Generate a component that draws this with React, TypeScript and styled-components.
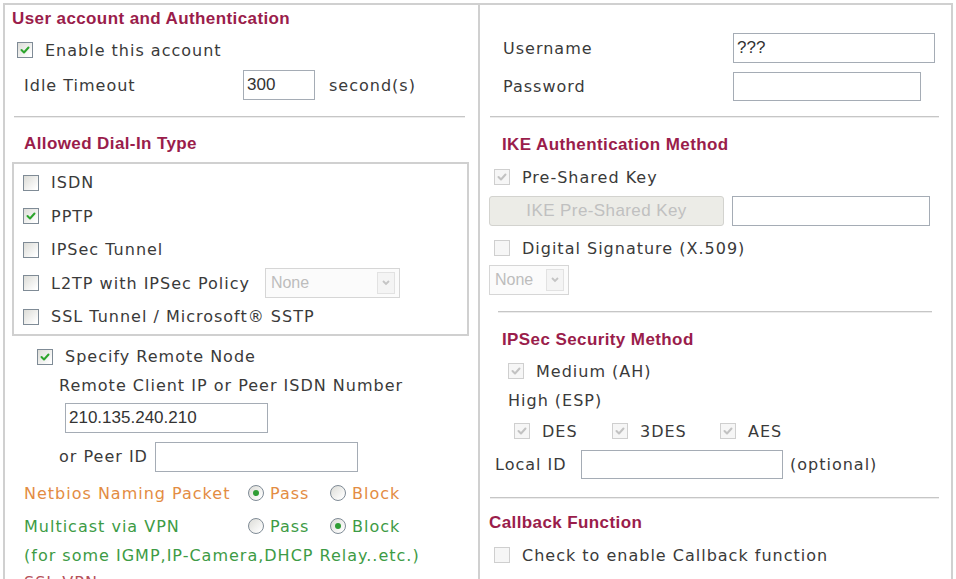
import React from "react";
import styled, { createGlobalStyle } from "styled-components";

const Global = createGlobalStyle`
  html, body { margin: 0; padding: 0; background: #fff; }
  body {
    font-family: "DejaVu Sans", Verdana, sans-serif;
    font-size: 16px;
    letter-spacing: 1px;
    color: #3a3a3a;
  }
  * { box-sizing: border-box; }
`;

const Page = styled.div`
  width: 956px;
  height: 579px;
  overflow: hidden;
  padding: 3px 0 0 3px;
`;

const Table = styled.div`
  width: 950px;
  height: 620px;
  border: 2px solid #d0d0d0;
  border-bottom: none;
  display: grid;
  grid-template-columns: 475px 1fr;
`;

const Column = styled.div<{ $divider?: boolean }>`
  display: flex;
  flex-direction: column;
  border-right: ${(p) => (p.$divider ? "2px solid #d0d0d0" : "none")};
`;

const Row = styled.div<{ $h: number; $pl?: number; $mt?: number }>`
  display: flex;
  align-items: center;
  height: ${(p) => p.$h}px;
  padding-left: ${(p) => p.$pl ?? 0}px;
  margin-top: ${(p) => p.$mt ?? 0}px;
  flex-shrink: 0;
  white-space: nowrap;
`;

const Heading = styled.span`
  font-family: "Liberation Sans", Arial, sans-serif;
  font-weight: bold;
  font-size: 17px;
  letter-spacing: 0.4px;
  color: #9a1d4b;
`;

const Divider = styled.div<{ $mt: number; $ml: number; $mr: number }>`
  margin: ${(p) => p.$mt}px ${(p) => p.$mr}px 0 ${(p) => p.$ml}px;
  border-top: 1px solid #c6c6c6;
  border-bottom: 1px solid #ececec;
  flex-shrink: 0;
`;

const GroupBox = styled.div`
  margin: 2px 9px 0 7px;
  border: 2px solid #d0d0d0;
  padding-top: 2px;
  display: flex;
  flex-direction: column;
  flex-shrink: 0;
`;

const GroupRow = styled.div`
  display: flex;
  align-items: center;
  height: 33.5px;
  padding-left: 9px;
  white-space: nowrap;
`;

const Label = styled.span<{ $w?: number; $color?: string }>`
  display: inline-block;
  width: ${(p) => (p.$w ? `${p.$w}px` : "auto")};
  color: ${(p) => p.$color ?? "#3a3a3a"};
`;

const Box = styled.span<{ $disabled?: boolean; $ml?: number }>`
  display: inline-flex;
  align-items: center;
  justify-content: center;
  width: 16px;
  height: 16px;
  margin-left: ${(p) => p.$ml ?? 0}px;
  margin-right: 12px;
  flex-shrink: 0;
  border: 1px solid ${(p) => (p.$disabled ? "#cfcfcf" : "#7f8b96")};
  background: ${(p) =>
    p.$disabled ? "#f6f6f6" : "linear-gradient(135deg, #dcdcd7 0%, #ffffff 90%)"};
`;

const Check = ({ checked, disabled, ml }: { checked?: boolean; disabled?: boolean; ml?: number }) => (
  <Box $disabled={disabled} $ml={ml}>
    {checked && (
      <svg width="12" height="12" viewBox="0 0 12 12">
        <path
          d="M2.5 6 L5 8.5 L9.5 3.5"
          fill="none"
          stroke={disabled ? "#c2c2c2" : "#2da52d"}
          strokeWidth="2"
          strokeLinecap="round"
          strokeLinejoin="round"
        />
      </svg>
    )}
  </Box>
);

const RadioCircle = styled.span`
  display: inline-flex;
  align-items: center;
  justify-content: center;
  width: 16px;
  height: 16px;
  border-radius: 50%;
  border: 1px solid #7f8b96;
  background: linear-gradient(135deg, #dcdcd7 0%, #ffffff 90%);
  margin-right: 6px;
  flex-shrink: 0;
`;

const Dot = styled.span`
  width: 6px;
  height: 6px;
  border-radius: 50%;
  background: #2f9d34;
`;

const RadioOption = styled.span<{ $w?: number; $color: string }>`
  display: inline-flex;
  align-items: center;
  width: ${(p) => (p.$w ? `${p.$w}px` : "auto")};
  color: ${(p) => p.$color};
`;

const Radio = ({ on, label, color, w }: { on?: boolean; label: string; color: string; w?: number }) => (
  <RadioOption $w={w} $color={color}>
    <RadioCircle>{on && <Dot />}</RadioCircle>
    {label}
  </RadioOption>
);

const CheckItem = styled.span<{ $w?: number }>`
  display: inline-flex;
  align-items: center;
  width: ${(p) => (p.$w ? `${p.$w}px` : "auto")};
`;

const TextInput = styled.div<{ $w: number; $h?: number; $ml?: number }>`
  width: ${(p) => p.$w}px;
  height: ${(p) => p.$h ?? 30}px;
  margin-left: ${(p) => p.$ml ?? 0}px;
  border: 1px solid #a5acb5;
  background: #fff;
  font-family: "Liberation Sans", Arial, sans-serif;
  font-size: 17px;
  letter-spacing: 0;
  color: #333;
  display: flex;
  align-items: center;
  padding-left: 3px;
  flex-shrink: 0;
`;

const Select = styled.div<{ $w: number; $ml?: number }>`
  width: ${(p) => p.$w}px;
  height: 30px;
  margin-left: ${(p) => p.$ml ?? 0}px;
  border: 1px solid #d6d6d6;
  background: #fbfbfb;
  display: flex;
  align-items: center;
  justify-content: space-between;
  padding: 0 4px 0 5px;
  font-family: "Liberation Sans", Arial, sans-serif;
  font-size: 16px;
  letter-spacing: 0;
  color: #bdbdbd;
  flex-shrink: 0;
`;

const Arrow = styled.span`
  width: 18px;
  height: 22px;
  border: 1px solid #e2e2e2;
  background: #f4f4f4;
  display: flex;
  align-items: center;
  justify-content: center;
`;

const SelectBox = ({ w, ml }: { w: number; ml?: number }) => (
  <Select $w={w} $ml={ml}>
    None
    <Arrow>
      <svg width="10" height="8" viewBox="0 0 10 8">
        <path d="M2 2 L5 5 L8 2" fill="none" stroke="#c4c4c4" strokeWidth="1.8" />
      </svg>
    </Arrow>
  </Select>
);

const Button = styled.div`
  width: 235px;
  height: 30px;
  margin-left: 9px;
  border: 1px solid #d3d3cf;
  border-radius: 3px;
  background: #ecece7;
  font-family: "Liberation Sans", Arial, sans-serif;
  font-size: 17px;
  letter-spacing: 0.4px;
  color: #c0c0c0;
  display: flex;
  align-items: center;
  justify-content: center;
  flex-shrink: 0;
`;

const Gap = styled.span<{ $w: number }>`
  display: inline-block;
  width: ${(p) => p.$w}px;
`;

const ORANGE = "#e38c43";
const GREEN = "#3d9b45";

export default function App() {
  return (
    <Page>
      <Global />
      <Table>
        <Column $divider>
          <Row $h={28} $pl={7}>
            <Heading>User account and Authentication</Heading>
          </Row>
          <Row $h={34}>
            <Check checked ml={12} />
            <Label>Enable this account</Label>
          </Row>
          <Row $h={36} $pl={19}>
            <Label $w={219}>Idle Timeout</Label>
            <TextInput $w={72}>300</TextInput>
            <Gap $w={14} />
            <Label>second(s)</Label>
          </Row>
          <Divider $mt={13} $ml={9} $mr={13} />
          <Row $h={32} $pl={19} $mt={10}>
            <Heading>Allowed Dial-In Type</Heading>
          </Row>
          <GroupBox>
            <GroupRow>
              <Check />
              <Label>ISDN</Label>
            </GroupRow>
            <GroupRow>
              <Check checked />
              <Label>PPTP</Label>
            </GroupRow>
            <GroupRow>
              <Check />
              <Label>IPSec Tunnel</Label>
            </GroupRow>
            <GroupRow>
              <Check />
              <Label>L2TP with IPSec Policy</Label>
              <SelectBox w={135} ml={15} />
            </GroupRow>
            <GroupRow>
              <Check />
              <Label>SSL Tunnel / Microsoft® SSTP</Label>
            </GroupRow>
          </GroupBox>
          <Row $h={32} $mt={5}>
            <Check checked ml={32} />
            <Label>Specify Remote Node</Label>
          </Row>
          <Row $h={26} $pl={54}>
            <Label>Remote Client IP or Peer ISDN Number</Label>
          </Row>
          <Row $h={38} $pl={60}>
            <TextInput $w={203}>210.135.240.210</TextInput>
          </Row>
          <Row $h={40} $pl={54}>
            <Label>or Peer ID</Label>
            <TextInput $w={203} $ml={7} />
          </Row>
          <Row $h={33} $pl={19}>
            <Label $w={224} $color={ORANGE}>Netbios Naming Packet</Label>
            <Radio on label="Pass" color={ORANGE} w={82} />
            <Radio label="Block" color={ORANGE} />
          </Row>
          <Row $h={33} $pl={19}>
            <Label $w={224} $color={GREEN}>Multicast via VPN</Label>
            <Radio label="Pass" color={GREEN} w={82} />
            <Radio on label="Block" color={GREEN} />
          </Row>
          <Row $h={26} $pl={19}>
            <Label $color={GREEN}>(for some IGMP,IP-Camera,DHCP Relay..etc.)</Label>
          </Row>
          <Row $h={28} $pl={19}>
            <Label $color="#b5505a">SSL VPN</Label>
          </Row>
        </Column>

        <Column>
          <Row $h={30} $pl={23} $mt={28}>
            <Label $w={230}>Username</Label>
            <TextInput $w={202}>???</TextInput>
          </Row>
          <Row $h={29} $pl={23} $mt={9}>
            <Label $w={230}>Password</Label>
            <TextInput $w={188} $h={29} />
          </Row>
          <Divider $mt={15} $ml={10} $mr={12} />
          <Row $h={32} $pl={22} $mt={11}>
            <Heading>IKE Authentication Method</Heading>
          </Row>
          <Row $h={32}>
            <Check checked disabled ml={14} />
            <Label>Pre-Shared Key</Label>
          </Row>
          <Row $h={30} $mt={3}>
            <Button>IKE Pre-Shared Key</Button>
            <TextInput $w={198} $ml={8} />
          </Row>
          <Row $h={34} $mt={5}>
            <Check disabled ml={14} />
            <Label>Digital Signature (X.509)</Label>
          </Row>
          <Row $h={30}>
            <SelectBox w={80} ml={9} />
          </Row>
          <Divider $mt={16} $ml={18} $mr={19} />
          <Row $h={32} $pl={22} $mt={11}>
            <Heading>IPSec Security Method</Heading>
          </Row>
          <Row $h={30}>
            <Check checked disabled ml={28} />
            <Label>Medium (AH)</Label>
          </Row>
          <Row $h={28} $pl={28}>
            <Label>High (ESP)</Label>
          </Row>
          <Row $h={34} $pl={34}>
            <CheckItem $w={98}>
              <Check checked disabled />
              DES
            </CheckItem>
            <CheckItem $w={108}>
              <Check checked disabled />
              3DES
            </CheckItem>
            <CheckItem>
              <Check checked disabled />
              AES
            </CheckItem>
          </Row>
          <Row $h={33} $pl={15}>
            <Label $w={86}>Local ID</Label>
            <TextInput $w={202} $h={29} />
            <Gap $w={7} />
            <Label>(optional)</Label>
          </Row>
          <Divider $mt={16} $ml={10} $mr={12} />
          <Row $h={32} $pl={9} $mt={8}>
            <Heading>Callback Function</Heading>
          </Row>
          <Row $h={32}>
            <Check disabled ml={14} />
            <Label>Check to enable Callback function</Label>
          </Row>
        </Column>
      </Table>
    </Page>
  );
}
